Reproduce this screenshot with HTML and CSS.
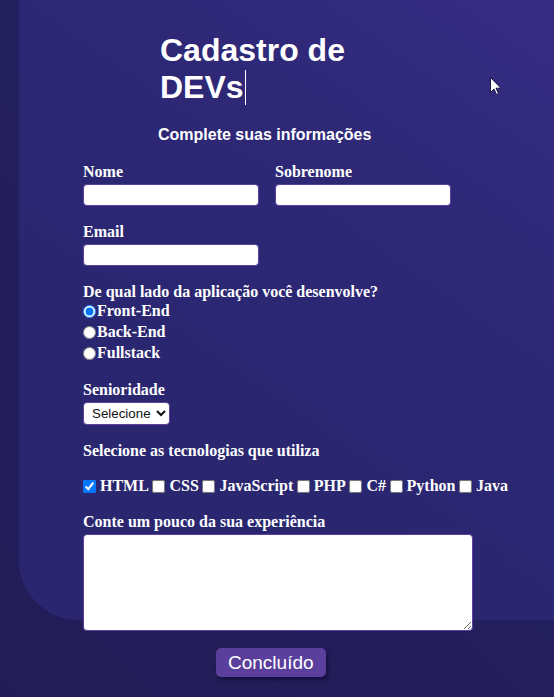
FILE: index.html
```html
<!DOCTYPE html>
<html lang="pt-BR">
<head>
<meta charset="utf-8">
<title>Cadastro de DEVs</title>
<link rel="stylesheet" href="styles.css">
</head>
<body>
<div class="backdrop"></div>
<main class="page">
  <h1 class="title">Cadastro de DEVs<span class="caret"></span></h1>
  <p class="subtitle">Complete suas informações</p>
  <form class="form">
    <div class="row">
      <div class="field">
        <label class="lbl" for="nome">Nome</label>
        <input class="text-input" id="nome" type="text">
      </div>
      <div class="field">
        <label class="lbl" for="sobrenome">Sobrenome</label>
        <input class="text-input" id="sobrenome" type="text">
      </div>
    </div>
    <div class="field">
      <label class="lbl" for="email">Email</label>
      <input class="text-input" id="email" type="email">
    </div>
    <div class="group">
      <span class="lbl">De qual lado da aplicação você desenvolve?</span>
      <label class="opt"><input class="radio" type="radio" name="lado" checked>Front-End</label>
      <label class="opt"><input class="radio" type="radio" name="lado">Back-End</label>
      <label class="opt"><input class="radio" type="radio" name="lado">Fullstack</label>
    </div>
    <div class="field">
      <label class="lbl" for="sen">Senioridade</label>
      <select class="select" id="sen">
        <option>Selecione</option>
        <option>Júnior</option>
        <option>Pleno</option>
        <option>Sênior</option>
      </select>
    </div>
    <span class="lbl">Selecione as tecnologias que utiliza</span>
    <div class="techs">
      <label class="tech"><input class="cb" type="checkbox" checked>HTML</label>
      <label class="tech"><input class="cb" type="checkbox">CSS</label>
      <label class="tech"><input class="cb" type="checkbox">JavaScript</label>
      <label class="tech"><input class="cb" type="checkbox">PHP</label>
      <label class="tech"><input class="cb" type="checkbox">C#</label>
      <label class="tech"><input class="cb" type="checkbox">Python</label>
      <label class="tech"><input class="cb" type="checkbox">Java</label>
    </div>
    <div class="field field-exp">
      <label class="lbl" for="exp">Conte um pouco da sua experiência</label>
      <textarea class="area" id="exp"></textarea>
    </div>
    <div class="actions">
      <button class="btn" type="button">Concluído</button>
    </div>
  </form>
</main>
<svg class="cursor" width="12" height="19" viewBox="0 0 12 19"><path d="M0.5 0.5 L0.5 15.5 L4 12 L6.5 17.5 L8.5 16.6 L6 11.2 L11 11.2 Z" fill="#fff" stroke="#1b1740" stroke-width="1"/></svg>
</body>
</html>
```
FILE: styles.css
```css
html, body {
  margin: 0;
  padding: 0;
}
body {
  position: relative;
  min-height: 697px;
  overflow: hidden;
  background: linear-gradient(45deg, #221d57 0%, #241f5e 60%, #2a2468 100%);
  color: #fff;
  font-family: "Liberation Serif", "Times New Roman", serif;
}
.backdrop {
  position: absolute;
  left: 19px;
  top: 0;
  right: 0;
  height: 620px;
  border-bottom-left-radius: 60px;
  background: linear-gradient(215deg, #362d84 0%, #2e2877 30%, #2a2670 65%, #2b2670 100%);
  z-index: 0;
}
.page {
  position: relative;
  z-index: 1;
  padding: 32px 0 0 83px;
}
.title {
  margin: 0 0 0 77px;
  width: 230px;
  font-family: "Liberation Sans", Arial, sans-serif;
  font-size: 32px;
  font-weight: 700;
  line-height: normal;
  color: #fff;
}
.caret {
  display: inline-block;
  width: 1px;
  height: 35px;
  margin-left: 1px;
  background: #fff;
  vertical-align: -7px;
}
.subtitle {
  margin: 20.4px 0 0 75px;
  font-family: "Liberation Sans", Arial, sans-serif;
  font-size: 16px;
  font-weight: 700;
  line-height: normal;
}
.form {
  display: flex;
  flex-direction: column;
  align-items: flex-start;
  gap: 17px;
  margin-top: 18.6px;
}
.row {
  display: flex;
  gap: 16px;
}
.field {
  display: flex;
  flex-direction: column;
  align-items: flex-start;
  gap: 3px;
}
.field-exp {
  margin-top: 0.5px;
  gap: 3px;
}
.lbl {
  display: block;
  font-size: 16px;
  font-weight: 700;
  line-height: normal;
}
.text-input {
  box-sizing: border-box;
  width: 176px;
  height: 22px;
  margin: 0;
  padding: 1px 4px;
  border: 1px solid #5b40a0;
  border-radius: 4px;
  background: #fff;
  font-family: "Liberation Sans", Arial, sans-serif;
  font-size: 13.33px;
}
.group {
  display: flex;
  flex-direction: column;
}
.opt {
  display: flex;
  align-items: center;
  height: 21px;
  font-size: 16px;
  font-weight: 700;
}
.radio {
  width: 13px;
  height: 13px;
  margin: 0 1px 0 0;
}
.select {
  box-sizing: border-box;
  height: 23px;
  margin: 0;
  padding: 0 2px 0 4px;
  border: 1px solid #5b40a0;
  border-radius: 4px;
  background: #fff;
  color: #111;
  font-family: "Liberation Sans", Arial, sans-serif;
  font-size: 13.33px;
}
.techs {
  display: flex;
  align-items: center;
  gap: 3.6px;
  height: 18.4px;
}
.tech {
  display: inline-flex;
  align-items: center;
  font-size: 16px;
  font-weight: 700;
  line-height: normal;
}
.cb {
  width: 13px;
  height: 13px;
  margin: 0 4px 0 0;
}
.area {
  box-sizing: border-box;
  width: 390px;
  height: 97px;
  margin: 0;
  border: 1px solid #5b40a0;
  border-radius: 4px;
  background: #fff;
}
.actions {
  padding-left: 133px;
}
.btn {
  box-sizing: border-box;
  height: 29px;
  padding: 0 12px;
  border: 0;
  border-radius: 5px;
  background: #5a3f9c;
  color: #fff;
  font-family: "Liberation Sans", Arial, sans-serif;
  font-size: 19px;
  line-height: 29px;
  box-shadow: 2px 3px 4px rgba(10, 6, 40, 0.55);
}
.cursor {
  position: absolute;
  left: 490px;
  top: 77px;
  z-index: 2;
}
```
